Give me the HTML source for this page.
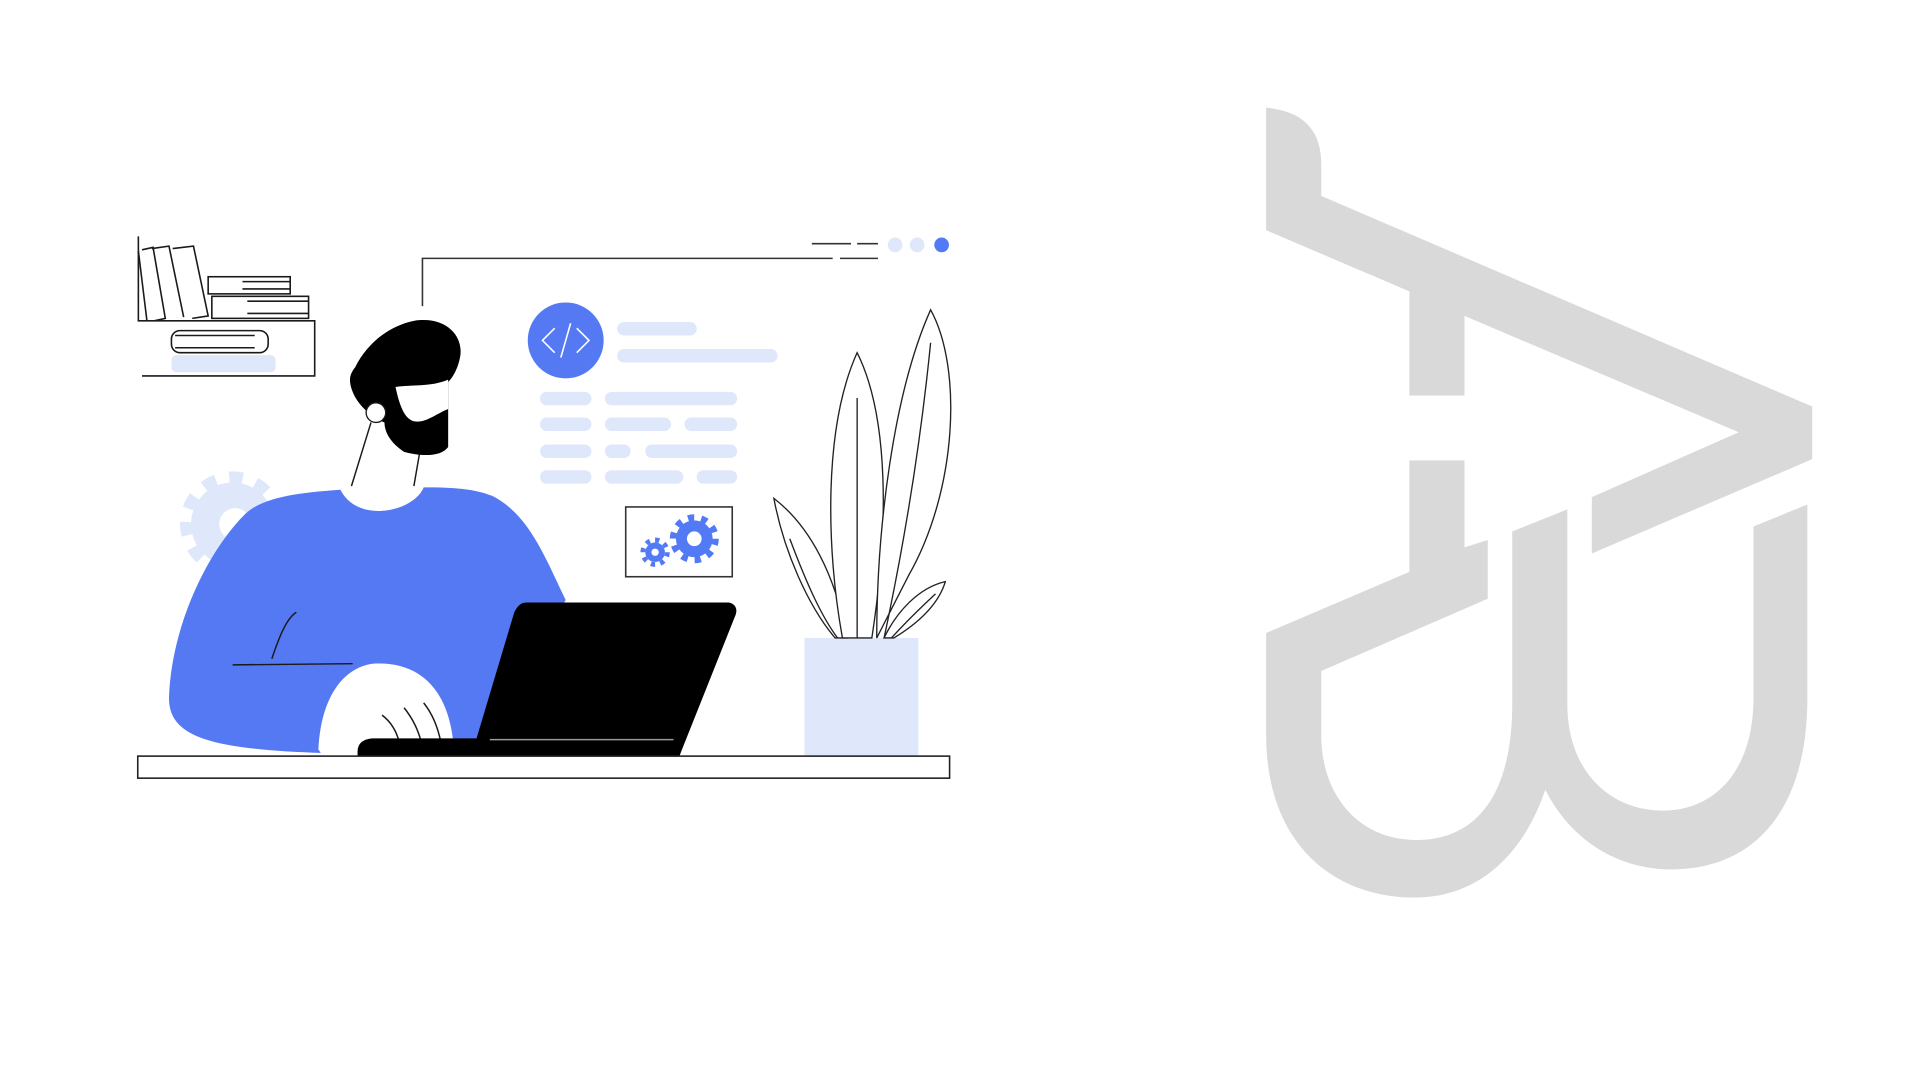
<!DOCTYPE html>
<html><head><meta charset="utf-8"><style>
html,body{margin:0;padding:0;background:#fff;width:1920px;height:1080px;overflow:hidden}
svg{display:block}
</style></head><body>
<svg width="1920" height="1080" viewBox="0 0 1568 882" xmlns="http://www.w3.org/2000/svg">
<rect width="1568" height="882" fill="#fff"/>
<!-- Logo -->
<g fill="#d9d9d9">
<path d="M1034,88 Q1079,92 1079,134 L1079,160 L1480,332 L1480,375 L1300,452 L1300,406 L1420,353 L1196,258 L1196,323 L1151,323 L1151,238 L1034,188 Z"/>
<path d="M1034,517 L1034,600 C1034,690 1090,733 1155,733 C1210,733 1245,695 1262,645 C1285,690 1325,710 1365,710 C1430,710 1476,665 1476,570 L1476,412 L1432,430 L1432,570 C1432,630 1400,662 1358,662 C1315,662 1280,630 1280,575 L1280,416 L1235,434 L1235,575 C1235,650 1205,686 1157,686 C1110,686 1079,650 1079,600 L1079,548 L1215,489 L1215,441 L1196,447 L1196,376 L1151,376 L1151,467 Z"/>
</g>
<!-- Illustration -->
<g stroke="#1a1a1a" stroke-width="1.3" fill="none">
<!-- shelf -->
<path d="M113,193 V262 H257 V307 H116"/>
<path d="M113,205 L120,262 M116,204 L125,202 L135,260 L126,262 M124,203 L138,201 L150,259 M141,203 L158,201 L170,258 L157,260"/>
<rect x="170" y="226" width="67" height="14" fill="#fff"/>
<path d="M198,230 H237 M198,236 H237"/>
<rect x="173" y="242" width="79" height="18" fill="#fff"/>
<path d="M202,246 H252 M202,256 H252"/>
<rect x="140" y="270" width="79" height="18" rx="7" fill="#fff"/>
<path d="M143,274 H208 M143,284 H208"/>
</g>
<rect x="140" y="290" width="85" height="14" rx="4" fill="#dfe7fb"/>
<!-- frame lines -->
<g stroke="#333" stroke-width="1.3" fill="none">
<path d="M345,250 V211 H680 M686,211 H717 M663,199 H695 M700,199 H717"/>
</g>
<circle cx="731" cy="200" r="6" fill="#dfe7fb"/>
<circle cx="749" cy="200" r="6" fill="#dfe7fb"/>
<circle cx="769" cy="200" r="6" fill="#537af5"/>
<!-- code -->
<circle cx="462" cy="278" r="31" fill="#5479f3"/>
<path d="M453,268 L443,278 L453,288 M471,268 L481,278 L471,288 M466,264 L458,292" stroke="#fff" stroke-width="1.3" fill="none"/>
<g fill="#dfe7fb">
<rect x="504" y="263" width="65" height="11" rx="5.5"/>
<rect x="504" y="285" width="131" height="11" rx="5.5"/>
<rect x="441" y="320" width="42" height="11" rx="5.5"/><rect x="494" y="320" width="108" height="11" rx="5.5"/>
<rect x="441" y="341" width="42" height="11" rx="5.5"/><rect x="494" y="341" width="54" height="11" rx="5.5"/><rect x="559" y="341" width="43" height="11" rx="5.5"/>
<rect x="441" y="363" width="42" height="11" rx="5.5"/><rect x="494" y="363" width="21" height="11" rx="5.5"/><rect x="527" y="363" width="75" height="11" rx="5.5"/>
<rect x="441" y="384" width="42" height="11" rx="5.5"/><rect x="494" y="384" width="64" height="11" rx="5.5"/><rect x="569" y="384" width="33" height="11" rx="5.5"/>
</g>
<!-- gear box -->
<rect x="511" y="414" width="87" height="57" fill="#fff" stroke="#333" stroke-width="1.3"/>
<circle cx="567" cy="440" r="15" fill="#537af5"/>
<circle cx="567" cy="440" r="17" fill="none" stroke="#537af5" stroke-width="6" stroke-dasharray="5 5.7"/>
<circle cx="567" cy="440" r="6" fill="#fff"/>
<circle cx="535" cy="451" r="8" fill="#537af5"/>
<circle cx="535" cy="451" r="10" fill="none" stroke="#537af5" stroke-width="4" stroke-dasharray="3.5 4.3"/>
<circle cx="535" cy="451" r="3" fill="#fff"/>
<!-- light gear -->
<circle cx="190" cy="428" r="34" fill="#dfe7fb"/>
<circle cx="190" cy="428" r="38" fill="none" stroke="#dfe7fb" stroke-width="10" stroke-dasharray="11 11"/>
<circle cx="192" cy="428" r="13" fill="#fff"/>
<!-- plant -->
<rect x="657" y="521" width="93" height="96" fill="#dfe7fb"/>
<g stroke="#222" stroke-width="1.1" fill="#fff">
<path d="M632,407 C640,450 660,495 682,521 L692,521 C682,470 662,430 632,407Z"/>
<path d="M700,288 C672,350 675,450 688,521 L712,521 C726,430 726,340 700,288Z"/>
<path d="M760,253 C786,300 782,400 742,470 L716,521 C716,430 730,320 760,253Z"/>
<path d="M772,475 C750,480 732,500 722,521 L730,521 C748,510 766,495 772,475Z"/>
<path d="M645,440 C660,480 672,505 684,521 M700,325 V521 M760,280 C750,380 735,460 722,521 M764,485 C750,498 738,510 728,521" fill="none"/>
</g>
<!-- person torso -->
<path d="M278,400 C250,402 215,405 200,420 C170,450 140,510 138,570 C138,602 172,612 265,615 L390,615 L462,490 C445,455 432,420 402,405 C385,398 362,398 346,398 C338,418 292,428 278,400 Z" fill="#5479f3"/>
<path d="M303,345 L287,397 M343,368 L338,397" stroke="#1a1a1a" stroke-width="1.2" fill="none"/>
<path d="M190,543 L288,542 M222,538 C228,520 234,505 242,500" stroke="#1a1a1a" stroke-width="1.2" fill="none"/>
<!-- hand -->
<path d="M260,612 C262,570 280,545 305,542 C340,540 365,560 370,605 L370,615 L262,615Z" fill="#fff"/>
<path d="M312,584 C320,590 324,598 326,606 M330,578 C338,588 342,598 344,606 M346,574 C354,584 358,596 360,606" stroke="#1a1a1a" stroke-width="1.2" fill="none"/>
<!-- head -->
<path d="M290,300 C300,280 318,266 338,262 C364,258 378,274 376,290 C374,303 368,310 366,312 L366,365 C360,373 345,373 330,369 C318,361 314,352 314,345 C302,340 292,330 288,320 C284,310 286,305 290,300Z" fill="#000"/>
<path d="M323,316 C338,314 352,316 366,310 L366,334 C356,338 347,346 338,344 C330,342 326,330 323,316Z" fill="#fff"/>
<circle cx="307" cy="337" r="8" fill="#fff" stroke="#1a1a1a" stroke-width="1.1"/>
<!-- laptop -->
<path d="M430,492 L595,492 C601,493 603,498 600,504 L555,617 L385,617 L420,500 C423,494 426,492 430,492Z" fill="#000"/>
<path d="M292,614 C292,606 298,603 306,603 L560,603 L555,617 L292,617Z" fill="#000"/>
<path d="M400,604 H550" stroke="#999" stroke-width="1.2"/>
<!-- desk -->
<rect x="112.5" y="617.5" width="663" height="18" fill="#fff" stroke="#222" stroke-width="1.3"/>
</svg>
</body></html>
